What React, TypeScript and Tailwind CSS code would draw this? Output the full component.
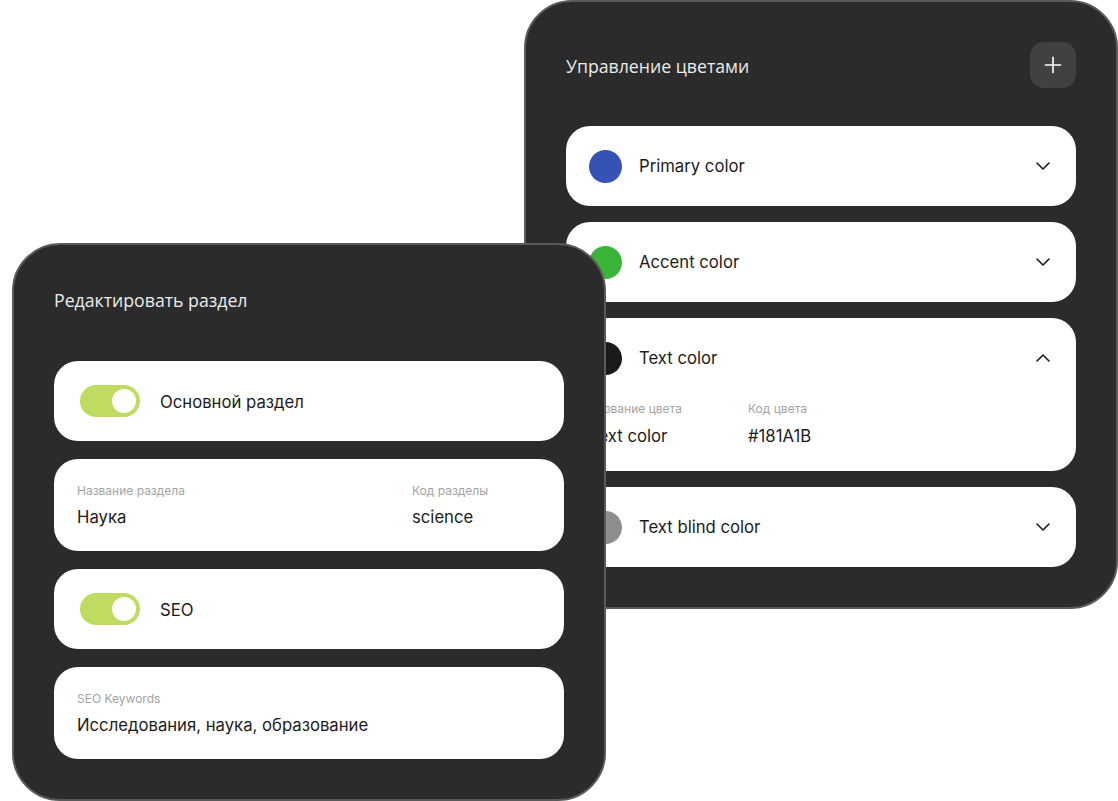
import React from "react";
import { ChevronDown, ChevronUp, Plus } from "lucide-react";

function ColorRow({ color, name, open }: { color: string; name: string; open?: boolean }) {
  return (
    <div className="rounded-[24px] bg-white">
      <div className="flex h-[80px] items-center pl-[23px] pr-[21px]">
        <div className="h-[33px] w-[33px] shrink-0 rounded-full" style={{ backgroundColor: color }} />
        <div className="ml-[17px] flex-1 pt-[2px] text-[16.7px] text-[#1b1b1b]">{name}</div>
        {open ? (
          <ChevronUp size={24} strokeWidth={1.6} className="text-[#1b1b1b]" />
        ) : (
          <ChevronDown size={24} strokeWidth={1.6} className="text-[#1b1b1b]" />
        )}
      </div>
      {open && (
        <div className="flex pb-[23px] pl-[23px] pt-[3px]">
          <div className="w-[159px]">
            <div className="h-[16px] text-[12px] leading-[16px] text-[#a3a3a3]">Название цвета</div>
            <div className="mt-[7px] h-[24px] text-[16.7px] leading-[24px] text-[#1b1b1b]">Text color</div>
          </div>
          <div>
            <div className="h-[16px] text-[12px] leading-[16px] text-[#a3a3a3]">Код цвета</div>
            <div className="mt-[7px] h-[24px] text-[16.7px] leading-[24px] text-[#1b1b1b]">#181A1B</div>
          </div>
        </div>
      )}
    </div>
  );
}

function Toggle() {
  return (
    <div className="flex h-[32px] w-[60px] shrink-0 items-center justify-end rounded-full bg-[#bedc5f] pr-[4px]">
      <div className="h-[24px] w-[24px] rounded-full bg-white" />
    </div>
  );
}

function ToggleRow({ label }: { label: string }) {
  return (
    <div className="flex h-[80px] items-center rounded-[24px] bg-white pl-[26px]">
      <Toggle />
      <div className="ml-[20px] pt-[3px] text-[16.7px] text-[#1b1b1b]">{label}</div>
    </div>
  );
}

function Field({ label, value, w }: { label: string; value: string; w?: string }) {
  return (
    <div className={w}>
      <div className="h-[16px] text-[12px] leading-[16px] text-[#a3a3a3]">{label}</div>
      <div className="mt-[6px] h-[24px] text-[16.7px] leading-[24px] text-[#1b1b1b]">{value}</div>
    </div>
  );
}

export default function App() {
  return (
    <div
      className="relative h-[801px] w-[1118px] overflow-hidden bg-white"
      style={{ fontFamily: "Inter, 'Noto Sans', sans-serif" }}
    >
      {/* Right panel */}
      <div className="absolute left-[524px] top-0 h-[609px] w-[594px] rounded-[48px] border-2 border-[#5a5a5a] bg-[#2b2b2b] px-[40px] pt-[40px]">
        <div className="flex h-[46px] items-center justify-between">
          <div
            className="pt-[2px] text-[17.7px] text-[#ececec]"
            style={{ fontFamily: "'Open Sans', sans-serif" }}
          >
            Управление цветами
          </div>
          <div className="flex h-[46px] w-[46px] items-center justify-center rounded-[14px] bg-[#414141]">
            <Plus size={26} strokeWidth={1.5} className="text-white" />
          </div>
        </div>
        <div className="mt-[38px] flex flex-col gap-[16px]">
          <ColorRow color="#3553b4" name="Primary color" />
          <ColorRow color="#3ab53a" name="Accent color" />
          <ColorRow color="#181a1b" name="Text color" open />
          <ColorRow color="#8e8e8e" name="Text blind color" />
        </div>
      </div>

      {/* Left panel */}
      <div className="absolute left-[12px] top-[243px] h-[558px] w-[594px] rounded-[48px] border-2 border-[#5a5a5a] bg-[#2b2b2b] px-[40px] pt-[43px]">
        <div
          className="h-[24px] text-[17.7px] leading-[24px] text-[#ececec]"
          style={{ fontFamily: "'Open Sans', sans-serif" }}
        >
          Редактировать раздел
        </div>
        <div className="mt-[49px] flex flex-col gap-[18px]">
          <ToggleRow label="Основной раздел" />
          <div className="flex h-[92px] rounded-[24px] bg-white pl-[23px] pt-[24px]">
            <Field label="Название раздела" value="Наука" w="w-[335px]" />
            <Field label="Код разделы" value="science" />
          </div>
          <ToggleRow label="SEO" />
          <div className="flex h-[92px] rounded-[24px] bg-white pl-[23px] pt-[24px]">
            <Field label="SEO Keywords" value="Исследования, наука, образование" />
          </div>
        </div>
      </div>
    </div>
  );
}
